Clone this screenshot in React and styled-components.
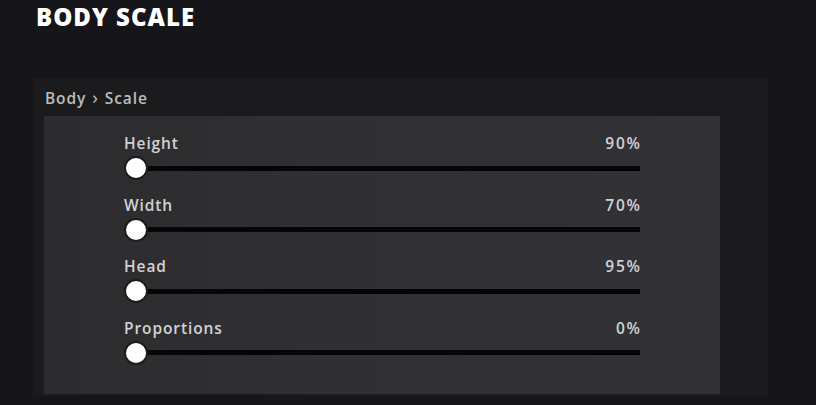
import styled, { createGlobalStyle } from 'styled-components';

const sliders = [
  { label: 'Height', value: 90 },
  { label: 'Width', value: 70 },
  { label: 'Head', value: 95 },
  { label: 'Proportions', value: 0 },
];

export default function App() {
  return (
    <>
      <GlobalStyle />
      <Page>
        <Title>BODY SCALE</Title>
        <Panel>
          <Breadcrumb>
            Body<Chevron>›</Chevron>Scale
          </Breadcrumb>
          <Inner>
            <List>
              {sliders.map((s) => (
                <Row key={s.label}>
                  <Header>
                    <span>{s.label}</span>
                    <Value>{s.value}%</Value>
                  </Header>
                  <Track>
                    <Thumb />
                  </Track>
                </Row>
              ))}
            </List>
          </Inner>
        </Panel>
      </Page>
    </>
  );
}

const GlobalStyle = createGlobalStyle`
  body {
    margin: 0;
    background: #16151a;
    font-family: 'Open Sans', 'DejaVu Sans', sans-serif;
  }
`;

const Page = styled.div`
  width: 816px;
  height: 405px;
  overflow: hidden;
  padding: 0 0 0 33px;
  box-sizing: border-box;
`;

const Title = styled.h1`
  margin: 0 0 0 3px;
  height: 78px;
  font-size: 24px;
  line-height: 33px;
  font-weight: 800;
  letter-spacing: 1px;
  color: #ffffff;
`;

const Panel = styled.section`
  width: 735px;
  height: 318px;
  background: #1b1b1d;
  padding: 9px 0 0 11px;
  box-sizing: border-box;
`;

const Breadcrumb = styled.div`
  height: 29px;
  padding-left: 1px;
  font-size: 15.5px;
  line-height: 20px;
  font-weight: 600;
  letter-spacing: 0.9px;
  color: #bdbdbd;
`;

const Chevron = styled.span`
  display: inline-block;
  font-weight: 400;
  font-size: 19px;
  margin: 0 6px;
`;

const Inner = styled.div`
  width: 676px;
  height: 278px;
  background: linear-gradient(90deg, #2c2c2e 0%, #303034 40%, #313136 100%);
  padding: 17px 0 0 80px;
  box-sizing: border-box;
`;

const List = styled.div`
  width: 516px;
  display: flex;
  flex-direction: column;
  gap: 14.5px;
`;

const Row = styled.div`
  display: flex;
  flex-direction: column;
  gap: 3px;
`;

const Header = styled.div`
  display: flex;
  justify-content: space-between;
  font-size: 15.5px;
  line-height: 20px;
  font-weight: 600;
  letter-spacing: 0.9px;
  color: #d2d2d4;
`;

const Value = styled.span`
  letter-spacing: 1.8px;
  margin-right: -1.8px;
`;

const Track = styled.div`
  position: relative;
  height: 24px;

  &::before {
    content: '';
    position: absolute;
    left: 12px;
    right: 0;
    top: 9.5px;
    height: 5px;
    background: #050507;
  }
`;

const Thumb = styled.div`
  position: absolute;
  left: 0;
  top: 0;
  width: 20px;
  height: 20px;
  border-radius: 50%;
  background: #ffffff;
  border: 2px solid #1c1c1e;
`;
